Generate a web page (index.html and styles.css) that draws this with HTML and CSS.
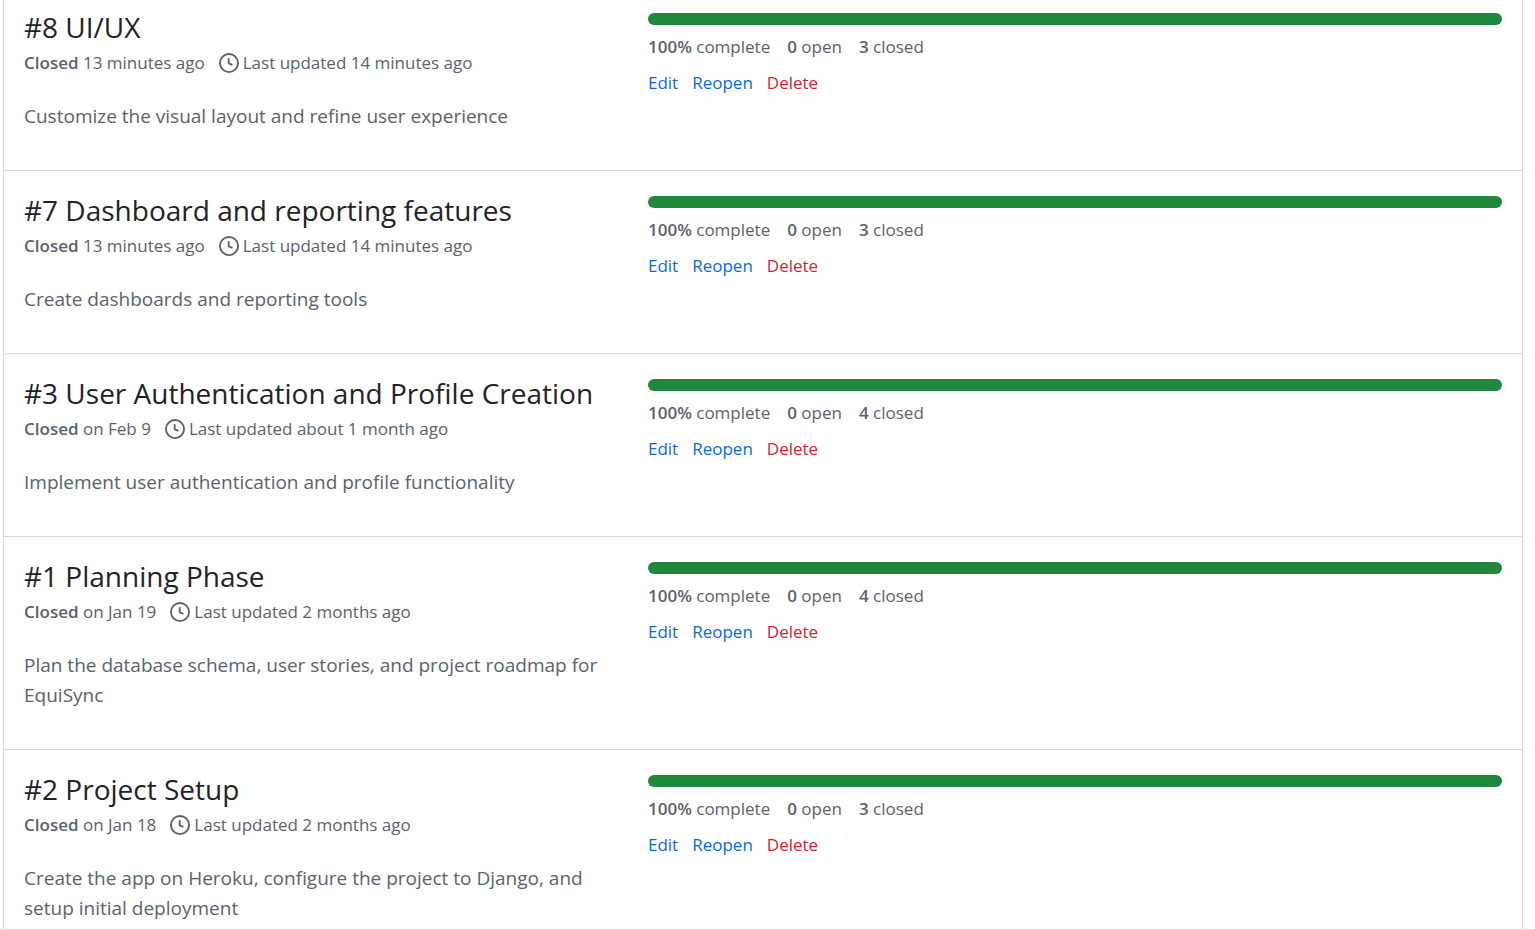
FILE: index.html
```html
<!DOCTYPE html>
<html lang="en">
<head>
<meta charset="utf-8">
<title>Milestones</title>
<link rel="stylesheet" href="styles.css">
</head>
<body>
<svg class="sprite" aria-hidden="true"><symbol id="clock" viewBox="0 0 16 16"><path d="M8 0a8 8 0 1 1 0 16A8 8 0 0 1 8 0ZM1.5 8a6.5 6.5 0 1 0 13 0 6.5 6.5 0 0 0-13 0Zm7-3.25v2.992l2.028.812a.75.75 0 0 1-.557 1.392l-2.5-1A.751.751 0 0 1 7 8.25v-3.5a.75.75 0 0 1 1.5 0Z"/></symbol></svg>
<main class="page">
<ul class="milestones">
<li class="milestone">
<div class="info">
<h2 class="title"><a href="#m8">#8 UI/UX</a></h2>
<div class="meta"><span><strong>Closed</strong> 13 minutes ago</span><span class="updated"><svg class="icon" aria-hidden="true"><use href="#clock"/></svg>Last updated 14 minutes ago</span></div>
<p class="description">Customize the visual layout and refine user experience</p>
</div>
<div class="progress">
<div class="bar"><div class="fill" style="width: 100%"></div></div>
<div class="stats"><span><strong>100%</strong> complete</span><span><strong>0</strong> open</span><span><strong>3</strong> closed</span></div>
<div class="actions"><a href="#edit">Edit</a><button type="button">Reopen</button><button type="button" class="danger">Delete</button></div>
</div>
</li>
<li class="milestone">
<div class="info">
<h2 class="title"><a href="#m7">#7 Dashboard and reporting features</a></h2>
<div class="meta"><span><strong>Closed</strong> 13 minutes ago</span><span class="updated"><svg class="icon" aria-hidden="true"><use href="#clock"/></svg>Last updated 14 minutes ago</span></div>
<p class="description">Create dashboards and reporting tools</p>
</div>
<div class="progress">
<div class="bar"><div class="fill" style="width: 100%"></div></div>
<div class="stats"><span><strong>100%</strong> complete</span><span><strong>0</strong> open</span><span><strong>3</strong> closed</span></div>
<div class="actions"><a href="#edit">Edit</a><button type="button">Reopen</button><button type="button" class="danger">Delete</button></div>
</div>
</li>
<li class="milestone">
<div class="info">
<h2 class="title"><a href="#m3">#3 User Authentication and Profile Creation</a></h2>
<div class="meta"><span><strong>Closed</strong> on Feb 9</span><span class="updated"><svg class="icon" aria-hidden="true"><use href="#clock"/></svg>Last updated about 1 month ago</span></div>
<p class="description">Implement user authentication and profile functionality</p>
</div>
<div class="progress">
<div class="bar"><div class="fill" style="width: 100%"></div></div>
<div class="stats"><span><strong>100%</strong> complete</span><span><strong>0</strong> open</span><span><strong>4</strong> closed</span></div>
<div class="actions"><a href="#edit">Edit</a><button type="button">Reopen</button><button type="button" class="danger">Delete</button></div>
</div>
</li>
<li class="milestone">
<div class="info">
<h2 class="title"><a href="#m1">#1 Planning Phase</a></h2>
<div class="meta"><span><strong>Closed</strong> on Jan 19</span><span class="updated"><svg class="icon" aria-hidden="true"><use href="#clock"/></svg>Last updated 2 months ago</span></div>
<p class="description">Plan the database schema, user stories, and project roadmap for EquiSync</p>
</div>
<div class="progress">
<div class="bar"><div class="fill" style="width: 100%"></div></div>
<div class="stats"><span><strong>100%</strong> complete</span><span><strong>0</strong> open</span><span><strong>4</strong> closed</span></div>
<div class="actions"><a href="#edit">Edit</a><button type="button">Reopen</button><button type="button" class="danger">Delete</button></div>
</div>
</li>
<li class="milestone">
<div class="info">
<h2 class="title"><a href="#m2">#2 Project Setup</a></h2>
<div class="meta"><span><strong>Closed</strong> on Jan 18</span><span class="updated"><svg class="icon" aria-hidden="true"><use href="#clock"/></svg>Last updated 2 months ago</span></div>
<p class="description">Create the app on Heroku, configure the project to Django, and setup initial deployment</p>
</div>
<div class="progress">
<div class="bar"><div class="fill" style="width: 100%"></div></div>
<div class="stats"><span><strong>100%</strong> complete</span><span><strong>0</strong> open</span><span><strong>3</strong> closed</span></div>
<div class="actions"><a href="#edit">Edit</a><button type="button">Reopen</button><button type="button" class="danger">Delete</button></div>
</div>
</li>
</ul>
</main>
</body>
</html>
```
FILE: styles.css
```css
* { box-sizing: border-box; }
body {
  margin: 0;
  background: #fff;
  color: #59636e;
  font-family: "Segoe UI", "Open Sans", "Noto Sans", sans-serif;
  font-size: 17px;
  line-height: 28px;
}
.sprite { display: none; }
.page {
  height: 100vh;
  overflow: hidden;
  padding: 0 12px 0 3px;
  border-bottom: 1px solid #d9dadb;
}
.milestones {
  margin: 0;
  padding: 0;
  list-style: none;
  border: solid #d1d9e0;
  border-width: 0 1px;
}
.milestone {
  display: grid;
  grid-template-columns: 41% 1fr;
  column-gap: 18px;
  padding: 20px 20px 39px;
  border-bottom: 1px solid #d1d9e0;
}
.milestone:first-child { padding-top: 8px; }
.title {
  margin: 0 0 3px;
  font-size: 28px;
  line-height: 38px;
  font-weight: 400;
}
.title a { color: #1f2328; text-decoration: none; }
.meta { display: flex; flex-wrap: wrap; column-gap: 14px; }
.updated { display: flex; align-items: center; gap: 4px; }
.icon { width: 20px; height: 20px; fill: currentColor; }
strong { font-weight: 600; }
.description {
  margin: 24px 0 0;
  font-size: 19px;
  line-height: 30px;
}
.progress { padding-top: 5px; }
.bar {
  height: 12px;
  border-radius: 6px;
  background: #eff2f5;
  overflow: hidden;
}
.fill { height: 100%; background: #1f883d; }
.stats { display: flex; gap: 17px; margin-top: 8px; }
.actions { display: flex; gap: 14px; margin-top: 8px; }
.actions a, .actions button {
  padding: 0;
  border: 0;
  background: none;
  color: #0969da;
  font: inherit;
  text-decoration: none;
  cursor: pointer;
}
.actions .danger { color: #d1242f; }
```
